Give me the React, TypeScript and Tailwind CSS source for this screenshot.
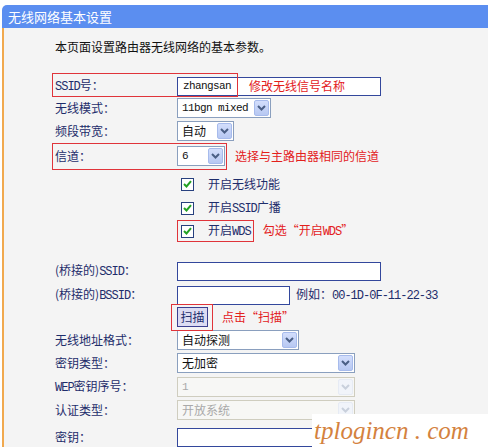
import type { ReactNode } from 'react';

const navy = 'text-[#1e2d6b]';

// half-width latin as the router page draws it
function Lt({ children }: { children: ReactNode }) {
  return (
    <span className="font-['Liberation_Mono',monospace] text-[12px] tracking-[-1px]">
      {children}
    </span>
  );
}

function Arrow({ disabled = false }: { disabled?: boolean }) {
  return (
    <div
      className={`ml-auto mr-[1px] h-[16px] w-[15px] shrink-0 rounded-[2px] border flex items-center justify-center ${
        disabled
          ? 'border-[#e6ebf4] bg-[#f1f4fa]'
          : 'border-[#a7bbec] bg-gradient-to-b from-[#d3defc] to-[#b7c8f2]'
      }`}
    >
      <svg width="9" height="6" viewBox="0 0 9 6">
        <path
          d="M1 1 L4.5 4.5 L8 1"
          fill="none"
          stroke={disabled ? '#c9d0dc' : '#4a5f86'}
          strokeWidth="2"
        />
      </svg>
    </div>
  );
}

function Select({
  w,
  value,
  mono = false,
  disabled = false,
}: {
  w: string;
  value: string;
  mono?: boolean;
  disabled?: boolean;
}) {
  return (
    <div
      className={`${w} h-[20px] flex items-center border pl-[4px] ${
        disabled
          ? 'border-[#cfcdbf] bg-[#f7f7f5] text-[#a9a9a9]'
          : 'border-[#8a9fbe] bg-white text-[#111]'
      }`}
    >
      {mono ? (
        <span className="font-['Liberation_Mono',monospace] text-[11px] tracking-[-0.6px]">
          {value}
        </span>
      ) : (
        <span className="text-[12px] leading-none">{value}</span>
      )}
      <Arrow disabled={disabled} />
    </div>
  );
}

function Input({ w, children }: { w: string; children?: ReactNode }) {
  return (
    <div className={`${w} h-[19px] flex items-center border border-[#33479c] bg-white`}>
      {children}
    </div>
  );
}

function Row({ mt, label, children }: { mt: string; label?: ReactNode; children?: ReactNode }) {
  return (
    <div className={`${mt} h-[22px] flex items-center`}>
      <div className={`w-[122px] shrink-0 text-[12px] leading-none ${navy}`}>{label}</div>
      {children}
    </div>
  );
}

function Box() {
  return (
    <div className="ml-[4px] h-[13px] w-[13px] border border-[#27407e] bg-white flex items-center justify-center">
      <svg width="9" height="8" viewBox="0 0 9 8">
        <path d="M1 4 L3.5 6.5 L8 1.2" fill="none" stroke="#24a124" strokeWidth="2" />
      </svg>
    </div>
  );
}

const red = 'text-[12px] leading-none text-[#e3201c]';

export default function App() {
  return (
    <div className="relative w-[488px] h-[447px] overflow-hidden bg-white pt-[5px] font-['Noto_Sans_CJK_SC',sans-serif]">
      {/* Header */}
      <div className="ml-[2px] h-[23px] rounded-tl-[5px] bg-[#5b8ef0] pl-[6px] flex items-center text-[13px] text-white">
        无线网络基本设置
      </div>

      {/* Body */}
      <div className="relative ml-[2px] h-[419px] border-l-2 border-[#f1a94e] bg-[#f4f4f4] pl-[51px] pt-[8px]">
        <div className="h-[22px] flex items-center text-[12px] text-[#111]">
          本页面设置路由器无线网络的基本参数。
        </div>

        <Row mt="mt-[17px]" label={<><Lt>SSID</Lt>号：</>}>
          <Input w="w-[204px]">
            <span className="ml-[5px] w-[66px] font-['Liberation_Mono',monospace] text-[11px] tracking-[-0.6px] text-[#111]">
              zhangsan
            </span>
            <span className={red}>修改无线信号名称</span>
          </Input>
        </Row>
        <Row mt="mt-0" label="无线模式：">
          <Select w="w-[94px]" value="11bgn mixed" mono />
        </Row>
        <Row mt="mt-[1px]" label="频段带宽：">
          <Select w="w-[57px]" value="自动" />
        </Row>
        <Row mt="mt-[3px]" label="信道：">
          <Select w="w-[48px]" value="6" mono />
          <span className={`ml-[10px] ${red}`}>选择与主路由器相同的信道</span>
        </Row>

        <Row mt="mt-[6px]">
          <Box />
          <div className={`ml-[14px] text-[12px] leading-none ${navy}`}>开启无线功能</div>
        </Row>
        <Row mt="mt-[2px]">
          <Box />
          <div className={`ml-[14px] text-[12px] leading-none ${navy}`}>
            开启<Lt>SSID</Lt>广播
          </div>
        </Row>
        <Row mt="mt-[1px]">
          <Box />
          <div className={`ml-[14px] text-[12px] leading-none ${navy}`}>
            开启<Lt>WDS</Lt>
          </div>
          <span className={`ml-[12px] ${red}`}>
            勾选“开启<Lt>WDS</Lt>”
          </span>
        </Row>

        <Row mt="mt-[18px]" label={<>(桥接的)<Lt>SSID</Lt>：</>}>
          <Input w="w-[204px]" />
        </Row>
        <Row mt="mt-[2px]" label={<>(桥接的)<Lt>BSSID</Lt>：</>}>
          <Input w="w-[113px]" />
          <span className={`ml-[6px] text-[12px] leading-none ${navy}`}>
            例如：<Lt>00-1D-0F-11-22-33</Lt>
          </span>
        </Row>
        <Row mt="mt-0">
          <button className="h-[20px] w-[31px] border border-[#3c3f8f] bg-[#dcdcf2] text-[12px] leading-none text-[#1e2d6b]">
            扫描
          </button>
          <span className={`ml-[14px] ${red}`}>点击“扫描”</span>
        </Row>
        <Row mt="mt-[1px]" label="无线地址格式：">
          <Select w="w-[122px]" value="自动探测" />
        </Row>
        <Row mt="mt-[1px]" label="密钥类型：">
          <Select w="w-[178px]" value="无加密" />
        </Row>
        <Row mt="mt-[2px]" label={<><Lt>WEP</Lt>密钥序号：</>}>
          <Select w="w-[178px]" value="1" mono disabled />
        </Row>
        <Row mt="mt-[1px]" label="认证类型：">
          <Select w="w-[178px]" value="开放系统" disabled />
        </Row>
        <Row mt="mt-[5px]" label="密钥：">
          <Input w="w-[204px]" />
        </Row>

        {/* red annotation boxes */}
        <div className="absolute left-[48px] top-[45px] h-[24px] w-[186px] border-[1.5px] border-[#e0343a]" />
        <div className="absolute left-[48px] top-[115px] h-[27px] w-[175px] border-[1.5px] border-[#e0343a]" />
        <div className="absolute left-[173px] top-[192px] h-[22px] w-[77px] border-[1.5px] border-[#e0343a]" />
        <div className="absolute left-[167px] top-[276px] h-[27px] w-[42px] border-[1.5px] border-[#e0343a]" />
      </div>

      {/* watermark */}
      <div className="absolute left-[312px] top-[414px] h-[33px] w-[176px] bg-white flex items-center pl-[2px]">
        <span className="font-['Liberation_Serif',serif] italic text-[25px] leading-none text-[#d4823e]">
          tplogincn . com
        </span>
      </div>
    </div>
  );
}
